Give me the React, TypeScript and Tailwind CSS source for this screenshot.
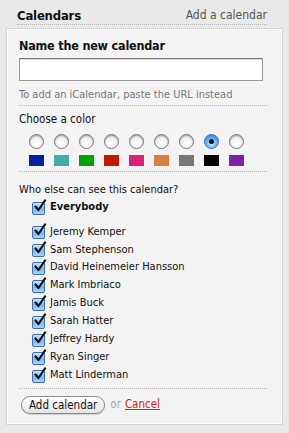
import React from "react";

const colors = ["#0022a0", "#44aca8", "#00a400", "#c01a00", "#dc2278", "#dc7c40", "#777777", "#000000", "#7a22aa"];
const people = ["Jeremy Kemper", "Sam Stephenson", "David Heinemeier Hansson", "Mark Imbriaco", "Jamis Buck", "Sarah Hatter", "Jeffrey Hardy", "Ryan Singer", "Matt Linderman"];

function Check() {
  return (
    <span className="relative block w-[13px] h-[13px] shrink-0">
      <span className="absolute left-0 top-[1px] w-[13px] h-[13px] rounded-[2px] border border-[#3d6fb0] bg-[linear-gradient(#cfe6fb,#7db6ee_55%,#a9d4fb)]" />
      <svg className="absolute left-[1px] top-[-2px]" width="14" height="14" viewBox="0 0 14 14">
        <path d="M2.5 7.5 L5.5 11 L12 1.5" fill="none" stroke="#111" strokeWidth="2.2" strokeLinecap="round" strokeLinejoin="round" />
      </svg>
    </span>
  );
}

function Radio({ on }: { on?: boolean }) {
  return on ? (
    <span className="flex items-center justify-center w-[15px] h-[15px] rounded-full border border-[#3a6fb5] bg-[radial-gradient(circle_at_50%_65%,#d8f0ff,#5aa6ee_55%,#2a6fd0)]">
      <span className="w-[5px] h-[5px] rounded-full bg-[#111]" />
    </span>
  ) : (
    <span className="block w-[15px] h-[15px] rounded-full border border-[#777] bg-[radial-gradient(circle_at_50%_70%,#ffffff,#f2f2f2_50%,#c8c8c8)] shadow-[inset_0_1px_1px_rgba(0,0,0,0.25)]" />
  );
}

export default function App() {
  return (
    <div className="w-[289px] h-[433px] bg-[#e9e9e9] font-['DejaVu_Sans_Condensed','DejaVu_Sans',sans-serif] font-stretch-condensed text-[#111] pt-[8px] overflow-hidden">
      <div className="mx-[17px] w-[250px] h-[17px] flex items-start justify-between border-b border-dotted border-[#b0b0b0]">
        <span className="text-[13px] font-bold leading-[15px] tracking-[-0.2px]">Calendars</span>
        <span className="text-[12px] leading-[15px] text-[#555]">Add a calendar</span>
      </div>
      <div className="mt-[4px] ml-[7px] w-[275px] h-[395px] bg-[#f3f3f3] border border-white shadow-[0_0_0_1px_#d4d4d4] pl-[11px] pr-[14px] pt-[8px]">
        <div className="text-[12.5px] font-bold leading-[16px] tracking-[-0.2px]">Name the new calendar</div>
        <div className="mt-[4px] w-[244px] h-[23px] bg-white border border-[#9a9a9a] border-t-[#777] shadow-[inset_0_1px_1px_rgba(0,0,0,0.15)]" />
        <div className="mt-[8px] h-[17px] border-b border-dotted border-[#b8b8b8] text-[11px] leading-[12px] text-[#777] whitespace-nowrap">To add an iCalendar, paste the URL instead</div>
        <div className="mt-[6px] text-[11.5px] leading-[14px]">Choose a color</div>
        <div className="mt-[8px] ml-[10px] flex gap-[10px]">
          {colors.map((c, i) => (
            <div key={c} className="w-[15px] flex flex-col items-center">
              <Radio on={i === 7} />
              <div className="mt-[6px] w-[15px] h-[11px]" style={{ backgroundColor: c }} />
            </div>
          ))}
        </div>
        <div className="mt-[5px] border-b border-dotted border-[#b8b8b8]" />
        <div className="mt-[11px] text-[11px] leading-[14px]">Who else can see this calendar?</div>
        <div className="mt-[1px] ml-[13px] flex items-center gap-[5px] h-[18px]">
          <Check />
          <span className="text-[11px] font-bold">Everybody</span>
        </div>
        <div className="mt-[7px] ml-[13px] flex flex-col">
          {people.map((p) => (
            <div key={p} className="flex items-center gap-[5px] h-[17.9px]">
              <Check />
              <span className="text-[11px] whitespace-nowrap">{p}</span>
            </div>
          ))}
        </div>
        <div className="mt-[4px] border-b border-dotted border-[#b8b8b8]" />
        <div className="mt-[7px] flex items-center">
          <button className="ml-[2px] h-[18px] px-[7px] rounded-full border border-[#8a8a8a] bg-[linear-gradient(#ffffff,#f4f4f4_50%,#e2e2e2)] text-[11.5px] leading-[14px] text-[#111] shadow-[0_1px_1px_rgba(0,0,0,0.15)]">Add calendar</button>
          <span className="ml-[5px] text-[11.5px] text-[#aaa]">or</span>
          <span className="ml-[4px] text-[11.5px] text-[#e41b0c] underline">Cancel</span>
        </div>
      </div>
    </div>
  );
}
